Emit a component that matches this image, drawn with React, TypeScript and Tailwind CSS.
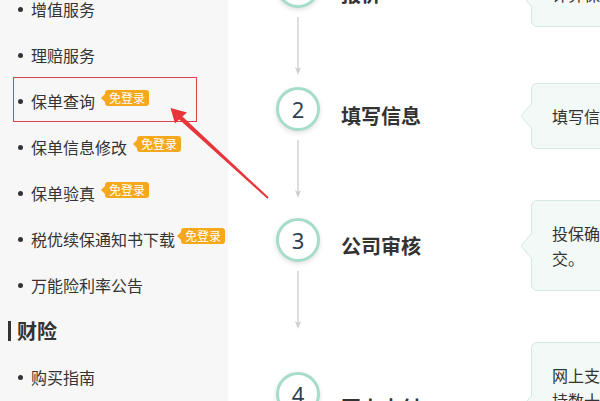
import React from "react";

const FONT = "font-['Noto_Sans_CJK_SC','Noto_Sans',sans-serif]";

function Badge({ tight }: { tight?: boolean }) {
  return (
    <span
      className={`relative inline-flex h-[16px] shrink-0 -translate-y-[3px] items-center rounded-[3px] bg-[#f6a81c] px-[4px] text-[12px] leading-none text-white ${
        tight ? "ml-[6px]" : "ml-[10px]"
      }`}
    >
      <span className="absolute left-[-4px] top-1/2 h-0 w-0 -translate-y-1/2 border-y-[4px] border-r-[4px] border-y-transparent border-r-[#f6a81c]" />
      免登录
    </span>
  );
}

function Item({ text, badge, tight }: { text: string; badge?: boolean; tight?: boolean }) {
  return (
    <li className="flex h-[46px] items-center whitespace-nowrap pl-[18px]">
      <span className="h-[5px] w-[5px] shrink-0 rounded-full bg-[#333]" />
      <span className="ml-[8px] text-[16px] text-[#333]">{text}</span>
      {badge && <Badge tight={tight} />}
    </li>
  );
}

function Connector() {
  return (
    <svg
      className="absolute left-1/2 top-[calc(100%+12px)] -translate-x-1/2"
      width="10"
      height="58"
      viewBox="0 0 10 58"
    >
      <line x1="5" y1="0" x2="5" y2="55" stroke="#d6d6d6" strokeWidth="1.6" />
      <path d="M2 50 L5 58 L8 50 L5 52 Z" fill="#cfcfcf" />
    </svg>
  );
}

type Step = {
  n: number;
  title: string;
  lines: string[];
  shift: string;
  box: string;
  connector: boolean;
};

const steps: Step[] = [
  { n: 1, title: "报价", lines: ["计算保费，在线报价"], shift: "-translate-y-[8px]", box: "", connector: true },
  { n: 2, title: "填写信息", lines: ["填写信息，确认投保内容"], shift: "-translate-y-[7px]", box: "", connector: true },
  { n: 3, title: "公司审核", lines: ["投保确认信息无误后，即可提", "交。"], shift: "-translate-y-[6px]", box: "", connector: true },
  { n: 4, title: "网上支付", lines: ["网上支付方式多样，支", "持数十家银行卡及第三方", "支付平台"], shift: "-translate-y-[14px]", box: "h-[132px]", connector: false },
];

function StepRow({ s }: { s: Step }) {
  return (
    <div className="flex items-center">
      <div className={`relative ml-[48px] flex h-[44px] w-[44px] shrink-0 items-center justify-center rounded-full border-[3px] border-[#a6dcca] bg-white shadow-[0_2px_5px_rgba(0,0,0,0.12)] ${s.shift}`}>
        <span className="font-['Noto_Sans',sans-serif] text-[22px] leading-none text-[#2e3f55]">{s.n}</span>
        {s.connector && <Connector />}
      </div>
      <div className="ml-[21px] w-[190px] shrink-0 whitespace-nowrap text-[20px] font-bold text-[#333]">{s.title}</div>
      <div className={`relative w-[320px] shrink-0 rounded-[6px] border border-[#d3e9e1] bg-[#f2f9f6] pb-[19px] pl-[20px] pt-[20px] ${s.box}`}>
        <svg className="absolute left-[-12px] top-1/2 -translate-y-1/2" width="12" height="26" viewBox="0 0 12 26">
          <polygon points="12,0 1,13 12,26" fill="#f2f9f6" />
          <polyline points="12,0 1,13 12,26" fill="none" stroke="#d3e9e1" strokeWidth="1" />
        </svg>
        {s.lines.map((l, i) => (
          <div key={i} className="whitespace-nowrap text-[16px] leading-[25px] text-[#333]">
            {l}
          </div>
        ))}
      </div>
    </div>
  );
}

export default function App() {
  return (
    <div className={`relative flex h-[401px] w-[600px] overflow-hidden bg-white ${FONT}`}>
      <aside className="w-[228px] shrink-0 bg-[#f7f7f7]">
        <ul className="-mt-[14px]">
          <Item text="增值服务" />
          <Item text="理赔服务" />
          <Item text="保单查询" badge />
          <Item text="保单信息修改" badge />
          <Item text="保单验真" badge />
          <Item text="税优续保通知书下载" badge tight />
          <Item text="万能险利率公告" />
        </ul>
        <div className="flex h-[46px] items-center pl-[8px]">
          <span className="h-[20px] w-[3px] bg-[#333]" />
          <span className="ml-[6px] text-[20px] font-bold text-[#333]">财险</span>
        </div>
        <ul>
          <Item text="购买指南" />
        </ul>
      </aside>
      <main className="-mt-[39px] flex min-w-0 flex-1 flex-col">
        <div className="mb-[56px]">
          <StepRow s={steps[0]} />
        </div>
        <div className="flex flex-col gap-[51px]">
          <StepRow s={steps[1]} />
          <StepRow s={steps[2]} />
          <StepRow s={steps[3]} />
        </div>
      </main>

      {/* annotation: red box */}
      <div className="pointer-events-none absolute left-[13px] top-[77px] h-[45px] w-[184px] border border-[#d9434a]" />
      {/* annotation: red arrow */}
      <svg className="pointer-events-none absolute left-0 top-0" width="600" height="401" viewBox="0 0 600 401">
        <polygon
          points="170.5,108 187,112.5 182.4,116.6 268.6,197.2 267.4,198.8 179.2,119.4 175,123.5"
          fill="#e8353b"
        />
      </svg>
    </div>
  );
}
